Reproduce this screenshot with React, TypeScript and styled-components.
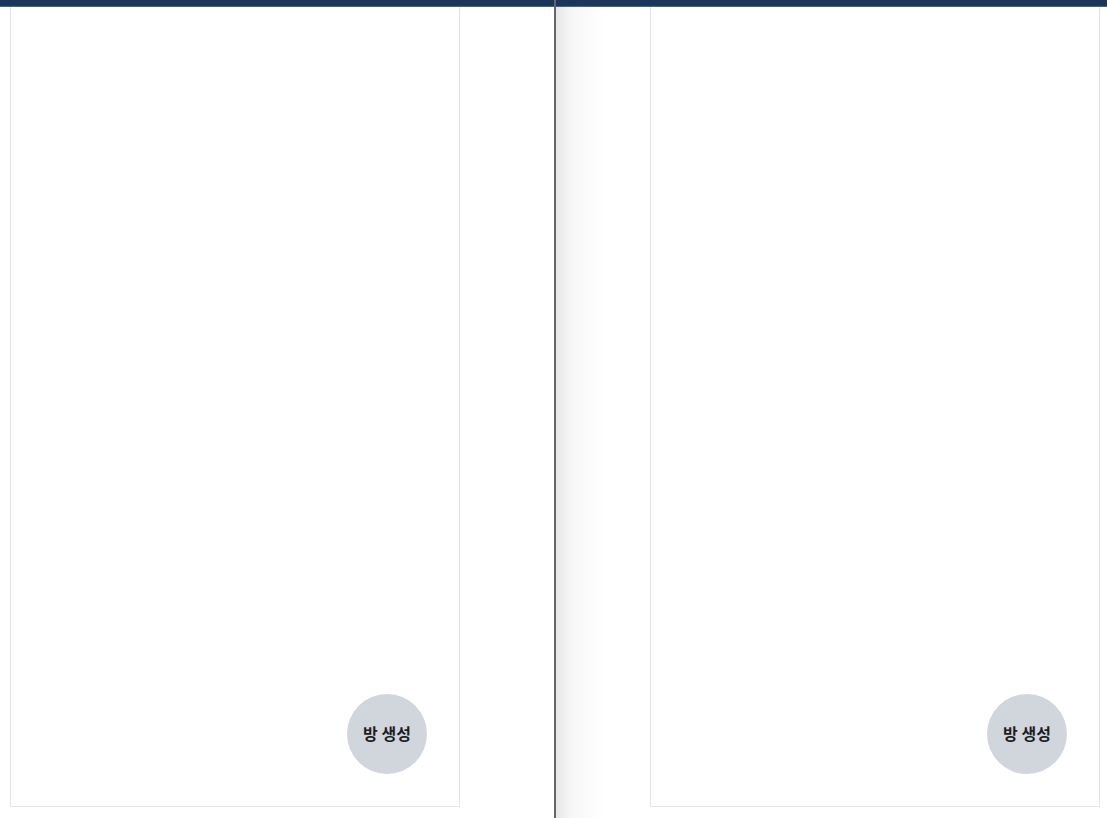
import React from 'react';
import styled, {createGlobalStyle} from "styled-components";

const Global = createGlobalStyle`
  html, body {
    margin: 0;
    padding: 0;
    height: 100%;
    background: #fff;
    font-family: "Noto Sans", "Noto Sans CJK KR", sans-serif;
  }
  #root { height: 100%; }
`

const Screen = styled.div`
  display: grid;
  grid-template-columns: 554px 2px 1fr;
  height: 818px;
  overflow: hidden;
`

const Pane = styled.div<{ $side: 'left' | 'right' }>`
  display: flex;
  flex-direction: column;
  min-width: 0;
  background: ${p => p.$side === 'right'
    ? 'linear-gradient(to right, #e6e6e6 0px, #f6f6f6 14px, #fdfdfd 38px, #fff 48px)'
    : '#fff'};
`

const TopBar = styled.div`
  height: 6px;
  background: #1b355c;
  border-bottom: 1px solid #4a6285;
  flex-shrink: 0;
`

const Divider = styled.div`
  background: #666;
`

const Body = styled.div<{ $side: 'left' | 'right' }>`
  display: flex;
  justify-content: ${p => p.$side === 'right' ? 'flex-end' : 'flex-start'};
  padding: ${p => p.$side === 'right' ? '0 7px 0 0' : '0 0 0 10px'};
`

const RoomList = styled.div`
  position: relative;
  box-sizing: border-box;
  width: 450px;
  height: 800px;
  border: 1px solid #e3e4e8;
  border-top: none;
  background: #fff;
`

const CreateButton = styled.button`
  position: absolute;
  right: 32px;
  bottom: 32px;
  width: 80px;
  height: 80px;
  border: none;
  border-radius: 50%;
  background: #d1d5dc;
  color: #1c1f26;
  font-family: "Noto Sans CJK KR", sans-serif;
  font-size: 16px;
  font-weight: 700;
  line-height: 1;
  cursor: pointer;
  padding: 0 0 2px;
`

function Side({side}: { side: 'left' | 'right' }) {
    return (
        <Pane $side={side}>
            <TopBar/>
            <Body $side={side}>
                <RoomList>
                    <CreateButton>방 생성</CreateButton>
                </RoomList>
            </Body>
        </Pane>
    )
}

export default function App() {
    return (
        <>
            <Global/>
            <Screen>
                <Side side="left"/>
                <Divider/>
                <Side side="right"/>
            </Screen>
        </>
    );
}
